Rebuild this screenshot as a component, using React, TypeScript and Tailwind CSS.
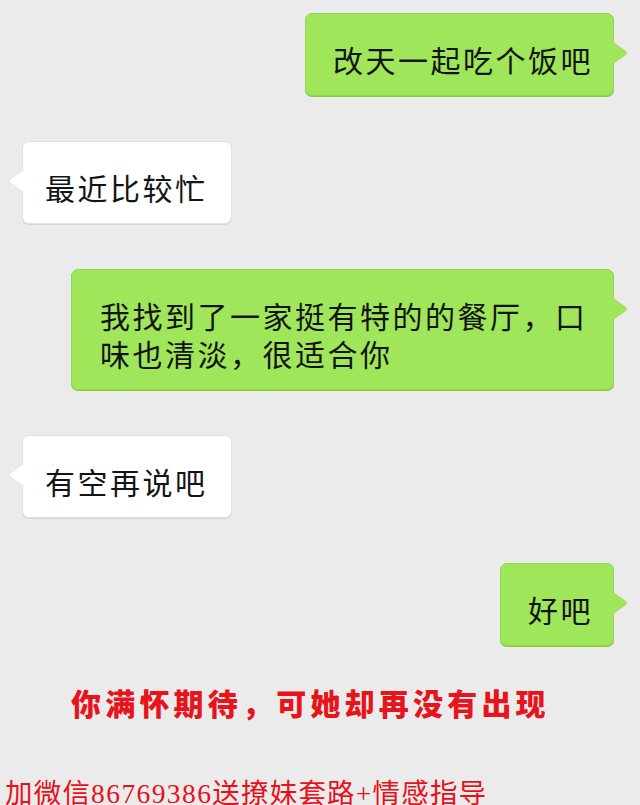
import React from "react";

const GREEN = "#9fe65b";

function Tail({ side, color, stroke }: { side: "left" | "right"; color: string; stroke: string }) {
  if (side === "right") {
    return (
      <svg
        className="absolute top-[27px] right-[-15px]"
        width="17"
        height="24"
        viewBox="0 0 17 24"
      >
        <path d="M0 0 L15 10.5 Q16.5 12 15 13.5 L0 24 Z" fill={color} stroke={stroke} strokeWidth="0.6" />
        <rect x="0" y="0" width="1.5" height="24" fill={color} />
      </svg>
    );
  }
  return (
    <svg className="absolute top-[27px] left-[-15px]" width="17" height="24" viewBox="0 0 17 24">
      <path d="M17 0 L2 10.5 Q0.5 12 2 13.5 L17 24 Z" fill={color} stroke={stroke} strokeWidth="0.6" />
      <rect x="15.5" y="0" width="1.5" height="24" fill={color} />
    </svg>
  );
}

function Bubble({
  side,
  width,
  pl,
  children,
}: {
  side: "left" | "right";
  width: string;
  pl: string;
  children: React.ReactNode;
}) {
  const green = side === "right";
  return (
    <div
      className={
        "relative rounded-[7px] pt-[26px] pb-[17px] text-[30px] leading-[38px] tracking-[2.5px] text-[#141414] whitespace-nowrap " +
        width +
        " " +
        pl +
        (green
          ? " bg-[#9fe65b] border border-[#93d752] shadow-[0_1px_0_#86c64a]"
          : " bg-white border border-[#e2e2e2] shadow-[0_1px_0_#d6d6d6]")
      }
    >
      {children}
      <Tail side={side} color={green ? GREEN : "#ffffff"} stroke={green ? "#93d752" : "#e0e0e0"} />
    </div>
  );
}

export default function App() {
  return (
    <div
      className="w-[640px] h-[805px] overflow-hidden bg-[#ebebeb] flex flex-col"
      style={{ fontFamily: '"Noto Sans CJK SC", "Noto Sans", sans-serif' }}
    >
      <div className="flex flex-col gap-[45px] pt-[13px]">
        <div className="flex justify-end pr-[26px]">
          <Bubble side="right" width="w-[309px]" pl="pl-[27px]">
            改天一起吃个饭吧
          </Bubble>
        </div>
        <div className="flex justify-start pl-[22px]">
          <Bubble side="left" width="w-[210px]" pl="pl-[22px]">
            最近比较忙
          </Bubble>
        </div>
        <div className="flex justify-end pr-[26px]">
          <Bubble side="right" width="w-[543px]" pl="pl-[28px]">
            我找到了一家挺有特的的餐厅，口
            <br />
            味也清淡，很适合你
          </Bubble>
        </div>
        <div className="flex justify-start pl-[22px]">
          <Bubble side="left" width="w-[210px]" pl="pl-[22px]">
            有空再说吧
          </Bubble>
        </div>
        <div className="flex justify-end pr-[26px]">
          <Bubble side="right" width="w-[114px]" pl="pl-[27px]">
            好吧
          </Bubble>
        </div>
      </div>

      <div className="mt-[36px] pl-[71px] text-[30px] leading-[40px] font-black tracking-[4.2px] text-[#e8141c] whitespace-nowrap">
        你满怀期待，可她却再没有出现
      </div>

      <div
        className="mt-[54px] pl-[5px] text-[27.5px] leading-[36px] tracking-[1.2px] text-[#e8101a] whitespace-nowrap"
        style={{ fontFamily: '"Liberation Serif", "Noto Sans CJK SC", serif' }}
      >
        加微信<span className="tracking-[1.4px]">86769386</span>送撩妹套路+情感指导
      </div>
    </div>
  );
}
